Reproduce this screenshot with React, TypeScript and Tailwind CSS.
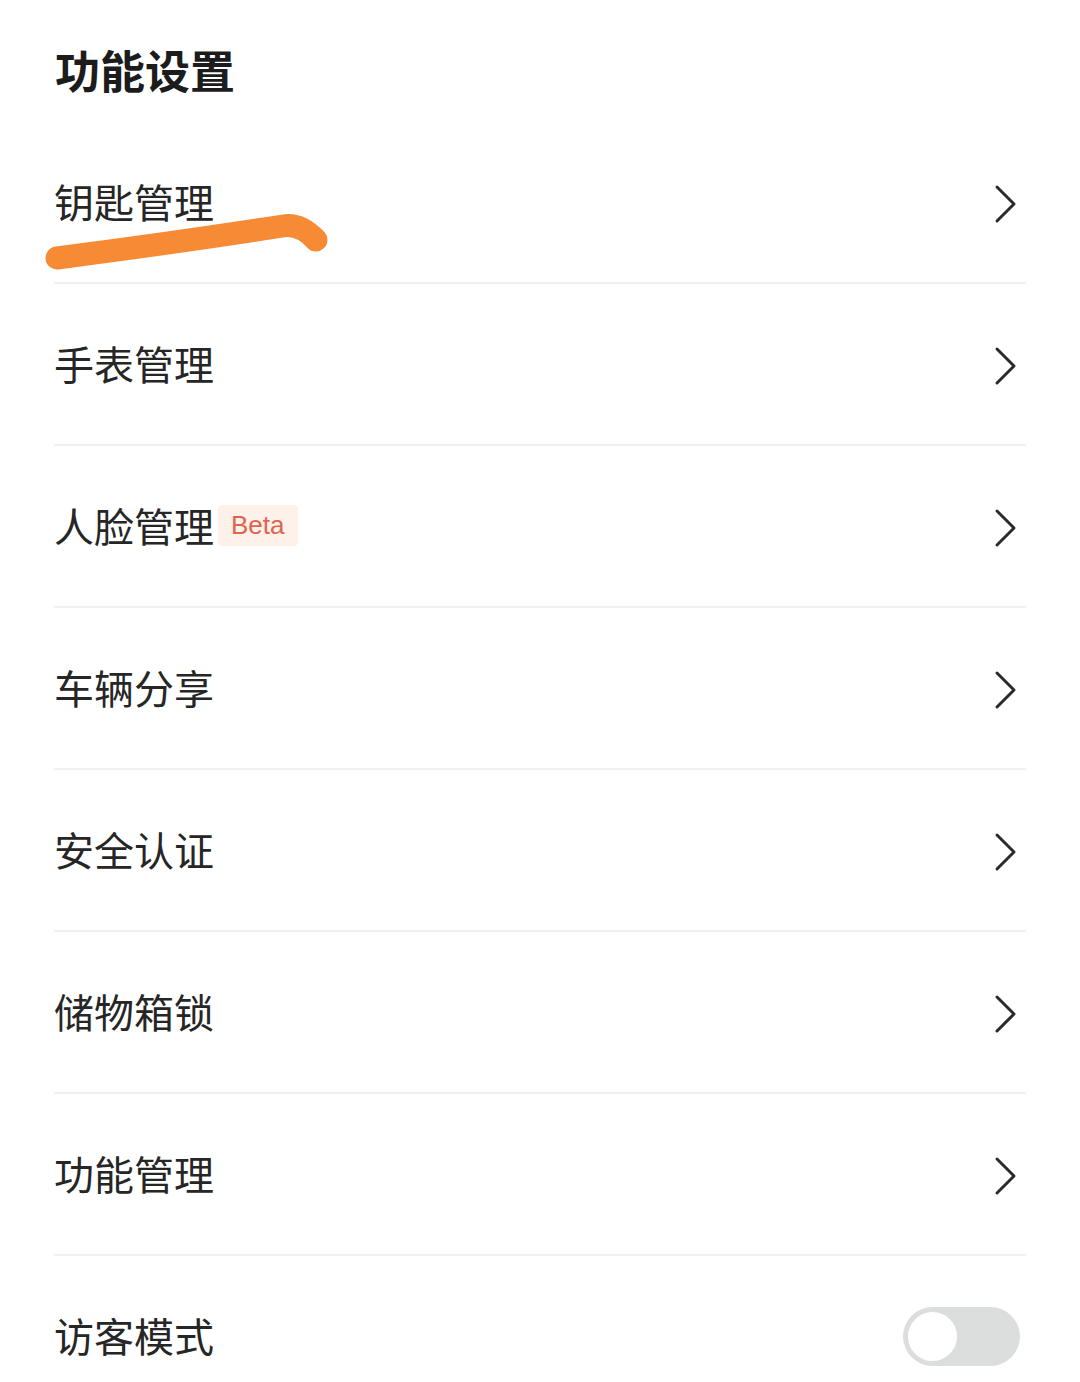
import React from "react";

const Chevron = () => (
  <svg width="26" height="40" viewBox="0 0 26 40" className="shrink-0">
    <polyline points="5,3 22,20 5,37" fill="none" stroke="#2a2a2a" strokeWidth="3" strokeLinecap="round" strokeLinejoin="round" />
  </svg>
);

const items: { label: string; beta?: boolean }[] = [
  { label: "钥匙管理" },
  { label: "手表管理" },
  { label: "人脸管理", beta: true },
  { label: "车辆分享" },
  { label: "安全认证" },
  { label: "储物箱锁" },
  { label: "功能管理" },
];

export default function App() {
  return (
    <div
      className="relative w-[1080px] h-[1382px] overflow-hidden bg-white"
      style={{ fontFamily: '"Noto Sans CJK SC", "Noto Sans", sans-serif' }}
    >
      <div className="pl-[55px] pt-[42px] h-[122px]">
        <h1 className="text-[45px] leading-[56px] font-bold text-[#1c1c1c]">功能设置</h1>
      </div>
      <div className="mx-[54px]">
        {items.map((it) => (
          <div key={it.label} className="flex items-center h-[162px] border-b-2 border-[#f0f0f0]">
            <div className="flex-1 flex items-center pb-[2px]">
              <span className="text-[40px] leading-[48px] text-[#262626]">{it.label}</span>
              {it.beta && (
                <span
                  className="ml-[4px] h-[41px] px-[13px] flex items-center rounded-[4px] bg-[#fdf1ea] text-[#de6550] text-[26px]"
                  style={{ fontFamily: '"Liberation Sans", Arial, sans-serif' }}
                >
                  Beta
                </span>
              )}
            </div>
            <div className="mr-[8px] mt-[3px]">
              <Chevron />
            </div>
          </div>
        ))}
        <div className="flex items-center h-[160px]">
          <span className="flex-1 text-[40px] leading-[48px] text-[#262626] pb-[2px]">访客模式</span>
          <div className="mr-[6px] w-[117px] h-[59px] rounded-full bg-[#dcdddd] flex items-center px-[5px]">
            <div className="w-[49px] h-[49px] rounded-full bg-white" />
          </div>
        </div>
      </div>
      <svg className="absolute left-0 top-0 pointer-events-none" width="400" height="300">
        <path
          d="M57 258 Q 180 242 283 226 Q 300 223 316 240"
          fill="none"
          stroke="#f78a35"
          strokeWidth="23"
          strokeLinecap="round"
          strokeLinejoin="round"
        />
      </svg>
    </div>
  );
}
